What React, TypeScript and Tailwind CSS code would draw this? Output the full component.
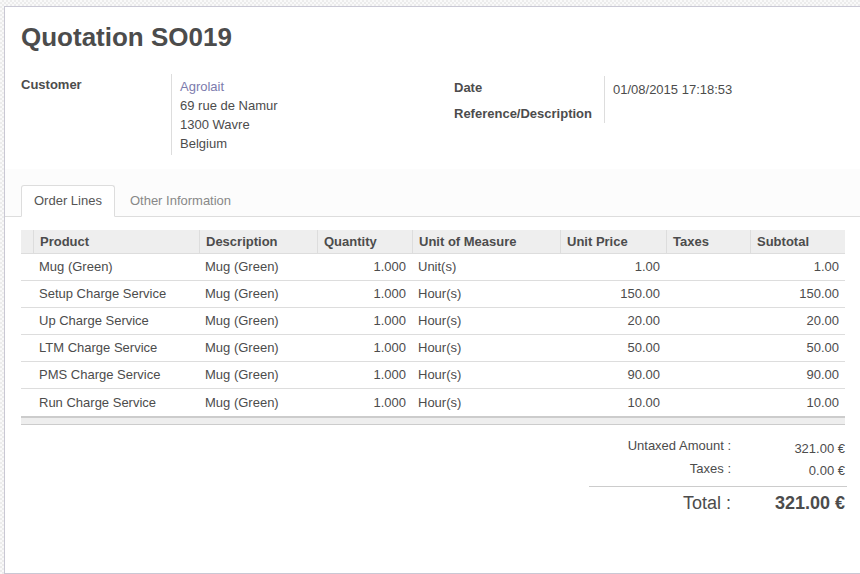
const lines = [
  { product: "Mug (Green)", qty: "1.000", uom: "Unit(s)", price: "1.00", subtotal: "1.00" },
  { product: "Setup Charge Service", qty: "1.000", uom: "Hour(s)", price: "150.00", subtotal: "150.00" },
  { product: "Up Charge Service", qty: "1.000", uom: "Hour(s)", price: "20.00", subtotal: "20.00" },
  { product: "LTM Charge Service", qty: "1.000", uom: "Hour(s)", price: "50.00", subtotal: "50.00" },
  { product: "PMS Charge Service", qty: "1.000", uom: "Hour(s)", price: "90.00", subtotal: "90.00" },
  { product: "Run Charge Service", qty: "1.000", uom: "Hour(s)", price: "10.00", subtotal: "10.00" },
];

const cols = "grid grid-cols-[12px_166px_118px_95px_148px_106px_84px_95px]";

const App = () => {
  return (
    <div className="w-[860px] h-[574px] overflow-hidden pt-[6px] pl-[4px] bg-[repeating-conic-gradient(#ececec_0%_25%,#f9f9f9_0%_50%)] bg-[length:4px_4px] font-['Liberation_Sans',Arial,sans-serif] text-[13px] text-[#4c4c4c]">
      <div className="w-[860px] h-[568px] shrink-0 bg-white border border-[#c9c8d4]">
        <div className="px-4 pt-[15px]">
          <h1 className="text-[26px] leading-[31px] font-bold text-[#4c4c4c]">
            Quotation SO019
          </h1>

          <div className="flex mt-[21px]">
            <div className="w-[433px] flex">
              <div className="w-[150px] pt-px leading-[19px] font-bold">Customer</div>
              <div className="border-l border-[#ddd] pl-2 pt-[3px] pb-[2px] leading-[19px]">
                <div className="text-[#7c7bad]">Agrolait</div>
                <div>69 rue de Namur</div>
                <div>1300 Wavre</div>
                <div>Belgium</div>
              </div>
            </div>
            <div className="flex mt-[2px] self-start">
              <div className="w-[150px] pt-[2px] flex flex-col gap-[7px] leading-[19px] font-bold">
                <div>Date</div>
                <div>Reference/Description</div>
              </div>
              <div className="border-l border-[#ddd] pl-2 pt-1 leading-[19px]">
                01/08/2015 17:18:53
              </div>
            </div>
          </div>
        </div>

        <div className="mt-[14px] pt-4 pl-4 bg-[#fcfcfc] border-b border-[#ddd] flex">
          <div className="h-[32px] -mb-px px-[12px] flex items-center bg-white border border-[#ddd] border-b-white rounded-t-[3px] mr-[2px] text-[#555]">
            Order Lines
          </div>
          <div className="h-[32px] -mb-px px-[13px] flex items-center text-[#888]">
            Other Information
          </div>
        </div>

        <div className="px-4 mt-[13px]">
          <div className="w-[824px]">
            <div className={`${cols} h-[24px] bg-[#eee] border-b border-[#ddd] font-bold leading-[19px]`}>
              <div />
              <div className="border-l border-[#ddd] px-[6px] flex items-center">Product</div>
              <div className="border-l border-[#ddd] px-[6px] flex items-center">Description</div>
              <div className="border-l border-[#ddd] px-[6px] flex items-center">Quantity</div>
              <div className="border-l border-[#ddd] px-[6px] flex items-center">Unit of Measure</div>
              <div className="border-l border-[#ddd] px-[6px] flex items-center">Unit Price</div>
              <div className="border-l border-[#ddd] px-[6px] flex items-center">Taxes</div>
              <div className="border-l border-[#ddd] px-[6px] flex items-center">Subtotal</div>
            </div>
            {lines.map((l, i) => (
              <div
                key={i}
                className={`${cols} h-[27px] pb-px items-center leading-[19px] ${
                  i < lines.length - 1 ? "border-b border-[#ddd]" : ""
                }`}
              >
                <div />
                <div className="px-[6px]">{l.product}</div>
                <div className="px-[6px]">Mug (Green)</div>
                <div className="px-[6px] text-right">{l.qty}</div>
                <div className="px-[6px]">{l.uom}</div>
                <div className="px-[6px] text-right">{l.price}</div>
                <div className="px-[6px]" />
                <div className="px-[6px] text-right">{l.subtotal}</div>
              </div>
            ))}
            <div className="h-[9px] bg-[#eee] border-t-2 border-b border-[#ccc]" />
          </div>

          <div className="ml-auto w-[258px] mt-[11px]">
            <div className="flex h-[23px] leading-[19px]">
              <div className="w-[142px] text-right">Untaxed Amount :</div>
              <div className="flex-1 text-right pr-[2px] pt-[3px]">321.00 €</div>
            </div>
            <div className="flex h-[23px] leading-[19px]">
              <div className="w-[142px] text-right">Taxes :</div>
              <div className="flex-1 text-right pr-[2px] pt-[2px]">0.00 €</div>
            </div>
            <div className="mt-[4px] border-t border-[#ccc] pt-[4px] flex leading-[24px] text-[18px]">
              <div className="w-[142px] text-right">Total :</div>
              <div className="flex-1 text-right pr-[2px] font-bold">321.00 €</div>
            </div>
          </div>
        </div>
      </div>
    </div>
  );
};

export default App;
